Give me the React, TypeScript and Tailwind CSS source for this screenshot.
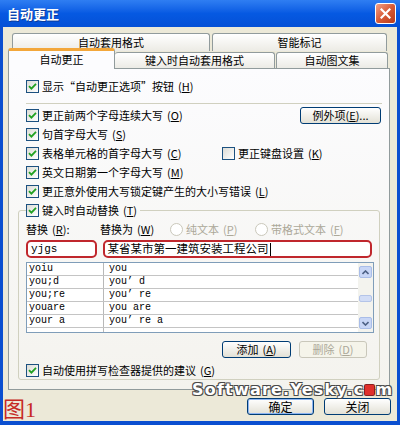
import type { ReactNode } from "react";

const CJK = "font-['SimSun','Noto_Sans_CJK_SC',sans-serif]";

function Check({ checked = true }: { checked?: boolean }) {
  return (
    <span className="flex h-[13px] w-[13px] shrink-0 items-center justify-center border border-[#1c5180] bg-linear-to-br from-[#dcdcd6] to-white">
      {checked && (
        <svg width="9" height="9" viewBox="0 0 9 9">
          <path d="M1 4.2 L3.4 6.6 L8 1.8" fill="none" stroke="#21a121" strokeWidth="1.8" />
        </svg>
      )}
    </span>
  );
}

function Radio({ label }: { label: ReactNode }) {
  return (
    <span className="flex items-center gap-[3px] text-[#aca899]">
      <span className="h-[13px] w-[13px] rounded-full border border-[#cac8bb] bg-white" />
      {label}
    </span>
  );
}

function CheckRow({ checked = true, children }: { checked?: boolean; children: ReactNode }) {
  return (
    <span className="flex items-center gap-[3px]">
      <Check checked={checked} />
      <span>{children}</span>
    </span>
  );
}

function Key({ k }: { k: string }) {
  return (
    <span className="ml-[4px]">
      (<span className="underline">{k}</span>)
    </span>
  );
}

function XpButton({
  children,
  width,
  disabled = false,
  primary = false,
}: {
  children: ReactNode;
  width: string;
  disabled?: boolean;
  primary?: boolean;
}) {
  return (
    <div
      className={`flex h-[17px] items-center justify-center rounded-[3px] border ${width} ${
        disabled
          ? "border-[#c9c7ba] bg-[#f5f4ea] text-[#aca899]"
          : primary
            ? "border-[#003c74] bg-linear-to-b from-white to-[#e3e1d6] shadow-[inset_0_0_0_1px_#8cb4f2]"
            : "border-[#003c74] bg-linear-to-b from-white to-[#e3e1d6]"
      }`}
    >
      {children}
    </div>
  );
}

const rows = [
  ["yoiu", "you"],
  ["you;d", "you’ d"],
  ["you;re", "you’ re"],
  ["youare", "you are"],
  ["your a", "you’ re a"],
  ["", ""],
];

export default function App() {
  return (
    <div className={`relative flex h-[425px] w-[400px] flex-col overflow-hidden bg-[#0b4fd0] text-[11px] leading-none text-black ${CJK}`}>
      {/* Title bar */}
      <div className="flex h-[27px] shrink-0 items-center justify-between bg-linear-to-b from-[#2f7ef2] via-[#0659e2] to-[#0450d6] pl-[7px] pr-[4px]">
        <span className="text-[13px] font-bold text-white [text-shadow:1px_1px_0_#0a3a9a]">自动更正</span>
        <div className="flex h-[21px] w-[21px] items-center justify-center rounded-[3px] border border-white bg-linear-to-br from-[#f0a088] via-[#d85a36] to-[#b83a1a]">
          <svg width="11" height="11" viewBox="0 0 11 11">
            <path d="M1.5 1.5 L9.5 9.5 M9.5 1.5 L1.5 9.5" stroke="white" strokeWidth="2.2" strokeLinecap="square" />
          </svg>
        </div>
      </div>

      {/* Dialog body */}
      <div className="mx-[3px] mb-[4px] flex flex-1 flex-col bg-[#ece9d8]">
        {/* Back row tabs */}
        <div className="ml-[9px] mt-[6px] flex h-[18px] gap-[2px]">
          <div className="flex w-[198px] items-center justify-center rounded-t-[3px] border border-b-0 border-[#919b9c] bg-linear-to-b from-white to-[#ecebe5]">
            自动套用格式
          </div>
          <div className="flex w-[175px] items-center justify-center rounded-t-[3px] border border-b-0 border-[#919b9c] bg-linear-to-b from-white to-[#ecebe5]">
            智能标记
          </div>
        </div>

        {/* Front row tabs */}
        <div className="relative z-10 -mt-[3px] ml-[5px] flex h-[21px] items-end">
          <div className="flex h-[21px] w-[107px] items-center justify-center rounded-t-[3px] border-x border-t-[3px] border-[#919b9c] border-t-[#f3a73a] bg-[#fcfcfe] pb-[1px]">
            自动更正
          </div>
          <div className="mb-[1px] flex h-[16px] w-[160px] items-center justify-center rounded-t-[3px] border border-b-0 border-l-0 border-[#919b9c] bg-linear-to-b from-white to-[#ecebe5]">
            键入时自动套用格式
          </div>
          <div className="mb-[1px] ml-[1px] flex h-[16px] w-[112px] items-center justify-center rounded-t-[3px] border border-b-0 border-[#919b9c] bg-linear-to-b from-white to-[#ecebe5]">
            自动图文集
          </div>
        </div>

        {/* Tab page */}
        <div className="-mt-[1px] ml-[5px] flex h-[322px] w-[382px] flex-col border border-[#919b9c] bg-linear-to-b from-[#fcfcfe] to-[#f4f3ee] pt-[8px]">
          <div className="flex h-[19px] items-center pl-[17px]">
            <CheckRow>
              显示“自动更正选项”按钮<Key k="H" />
            </CheckRow>
          </div>
          <div className="ml-[17px] mr-[7px] mt-[7px] h-px bg-[#d0d0bf]" />

          <div className="mt-[2px] flex h-[19px] items-center justify-between pl-[17px] pr-[8px]">
            <CheckRow>
              更正前两个字母连续大写<Key k="O" />
            </CheckRow>
            <XpButton width="w-[81px]">
              例外项(<span className="underline">E</span>)...
            </XpButton>
          </div>
          <div className="flex h-[19px] items-center pl-[17px]">
            <CheckRow>
              句首字母大写<Key k="S" />
            </CheckRow>
          </div>
          <div className="flex h-[19px] items-center pl-[17px]">
            <div className="w-[196px]">
              <CheckRow>
                表格单元格的首字母大写<Key k="C" />
              </CheckRow>
            </div>
            <CheckRow checked={false}>
              更正键盘设置<Key k="K" />
            </CheckRow>
          </div>
          <div className="flex h-[19px] items-center pl-[17px]">
            <CheckRow>
              英文日期第一个字母大写<Key k="M" />
            </CheckRow>
          </div>
          <div className="flex h-[19px] items-center pl-[17px]">
            <CheckRow>
              更正意外使用大写锁定键产生的大小写错误<Key k="L" />
            </CheckRow>
          </div>

          {/* Replace group */}
          <div className="mx-[9px] mt-[9px] flex flex-col rounded-[3px] border border-[#d0d0bf] px-[7px]">
            <div className="-mt-[10px] flex h-[19px] w-fit items-center bg-[#f9f9f7] pr-[3px]">
              <CheckRow>
                键入时自动替换<Key k="T" />
              </CheckRow>
            </div>

            <div className="flex h-[18px] items-center">
              <span className="w-[74px]">
                替换<Key k="R" />:
              </span>
              <span className="w-[70px]">
                替换为<Key k="W" />
              </span>
              <span className="w-[85px]">
                <Radio label={<span>纯文本<Key k="P" /></span>} />
              </span>
              <Radio label={<span>带格式文本<Key k="F" /></span>} />
            </div>

            <div className="mt-[2px] flex h-[18px] gap-[6px]">
              <div className="flex w-[71px] items-center rounded-[5px] border-2 border-[#c0272d] bg-white pl-[3px] font-['Liberation_Mono',monospace] text-[11px]">
                yjgs
              </div>
              <div className="flex w-[271px] items-center rounded-[5px] border-2 border-[#c0272d] bg-white pl-[3px] text-[11.5px]">
                某省某市第一建筑安装工程公司<span className="ml-[1px] h-[13px] w-px bg-black" />
              </div>
            </div>

            {/* List */}
            <div className="mt-[4px] flex h-[71px] w-[348px] overflow-hidden border border-[#7f9db9] bg-white">
              <div className="flex flex-1 flex-col font-['Liberation_Mono',monospace] text-[10px]">
                {rows.map(([a, b], i) => (
                  <div key={i} className="flex h-[13px] shrink-0 border-b border-[#c4c4c4]">
                    <span className="flex w-[77px] shrink-0 items-center border-r border-[#b8b8b8] pl-[2px]">{a}</span>
                    <span className="flex items-center pl-[5px]">{b}</span>
                  </div>
                ))}
              </div>
              <div className="flex w-[15px] shrink-0 flex-col items-center bg-[#f3f3ee] px-[1px] py-[3px]">
                <div className="flex h-[12px] w-[13px] items-center justify-center rounded-[2px] border border-[#a9bde8] bg-[#c8d6f6]">
                  <svg width="7" height="5" viewBox="0 0 7 5">
                    <path d="M0.5 4 L3.5 1 L6.5 4" fill="none" stroke="#4d6185" strokeWidth="1.6" />
                  </svg>
                </div>
                <div className="mt-[17px] h-[7px] w-[13px] rounded-[2px] border border-[#b4c4e8] bg-[#d2ddf6]" />
                <div className="mt-auto flex h-[12px] w-[13px] items-center justify-center rounded-[2px] border border-[#a9bde8] bg-[#c8d6f6]">
                  <svg width="7" height="5" viewBox="0 0 7 5">
                    <path d="M0.5 1 L3.5 4 L6.5 1" fill="none" stroke="#4d6185" strokeWidth="1.6" />
                  </svg>
                </div>
              </div>
            </div>

            <div className="mt-[8px] flex justify-end gap-[8px] pr-[5px]">
              <XpButton width="w-[69px]">
                添加<Key k="A" />
              </XpButton>
              <XpButton width="w-[68px]" disabled>
                删除<Key k="D" />
              </XpButton>
            </div>

            <div className="mt-[3px] flex h-[18px] items-center">
              <CheckRow>
                自动使用拼写检查器提供的建议<Key k="G" />
              </CheckRow>
            </div>
          </div>
        </div>

        {/* Footer */}
        <div className="flex flex-1 items-start">
          <span className="mt-[9px] text-[22px] leading-none text-[#c62a24] font-['Liberation_Serif','Noto_Sans_CJK_SC',serif]">图1</span>
          <div className="ml-auto mr-[6px] mt-[8px] flex gap-[10px] text-[12px]">
            <XpButton width="w-[67px]" primary>
              确定
            </XpButton>
            <XpButton width="w-[67px]">关闭</XpButton>
          </div>
        </div>
      </div>

      {/* Watermark */}
      <div className="absolute left-[192px] top-[383px] flex h-[14px] items-center font-['DejaVu_Sans',sans-serif] text-[16px] font-bold leading-[14px] tracking-[1.2px] text-white [text-shadow:1px_1px_0_#4a4a4a,-1px_-1px_0_#4a4a4a,1px_-1px_0_#4a4a4a,-1px_1px_0_#4a4a4a]">
        Software.Yesky.c
        <span className="mx-[1px] inline-block h-[10px] w-[9px] rounded-[1px] bg-[#e0302c] shadow-[0_0_0_1px_#8a2020]" />
        m
      </div>
    </div>
  );
}
